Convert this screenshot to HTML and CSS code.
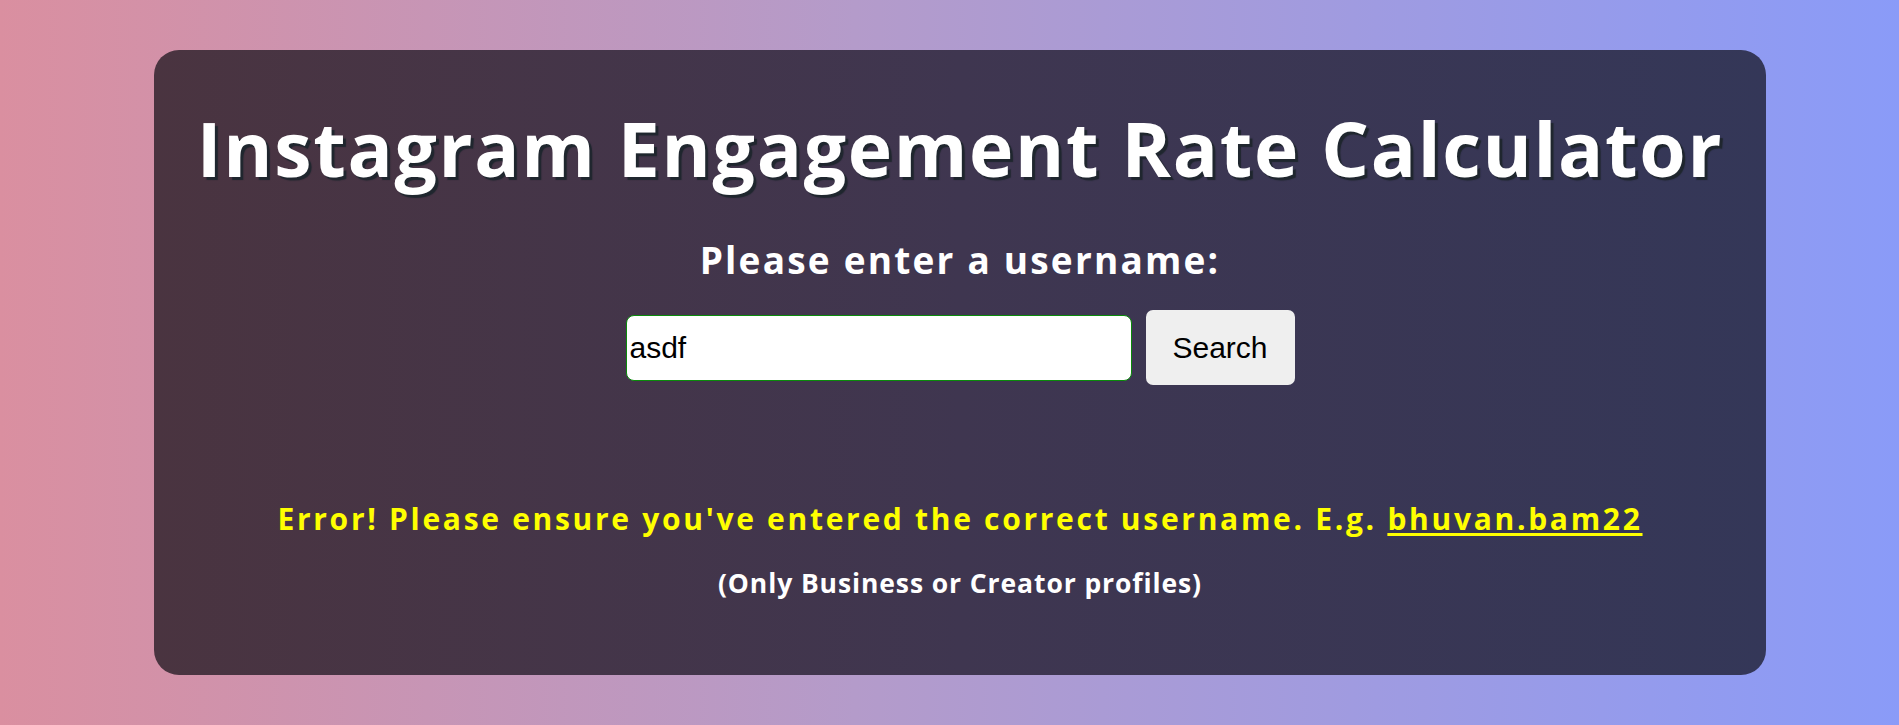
FILE: index.html
```html
<!DOCTYPE html>
<html lang="en">
<head>
<meta charset="utf-8">
<title>Instagram Engagement Rate Calculator</title>
<link rel="stylesheet" href="styles.css">
</head>
<body>
<main class="card">
  <h1 class="title">Instagram Engagement Rate Calculator</h1>
  <h2 class="prompt">Please enter a username:</h2>
  <form class="search-row">
    <input class="search-input" type="text" value="asdf">
    <button class="search-btn" type="button">Search</button>
  </form>
  <p class="error">Error! Please ensure you've entered the correct username. E.g. <a class="error-link" href="#">bhuvan.bam22</a></p>
  <p class="note">(Only Business or Creator profiles)</p>
</main>
</body>
</html>
```
FILE: styles.css
```css
html, body {
  margin: 0;
  padding: 0;
}
body {
  width: 1899px;
  height: 725px;
  overflow: hidden;
  background: linear-gradient(to right, #da8fa0 0%, #b49bca 45%, #8a9bf8 100%);
  font-family: "Open Sans", "Lato", sans-serif;
  color: #ffffff;
}
.card {
  box-sizing: border-box;
  margin: 50px 133px 0 154px;
  height: 625px;
  border-radius: 25px;
  background: linear-gradient(to right, #4a3440 0%, #3f3650 50%, #343758 100%);
  display: flex;
  flex-direction: column;
  align-items: center;
  padding-top: 53px;
}
.title {
  margin: 0;
  font-size: 75px;
  font-weight: 700;
  line-height: 90px;
  letter-spacing: 1.7px;
  text-shadow: 3px 3px 1px #1f262e;
  white-space: nowrap;
}
.prompt {
  margin: 45px 0 0;
  font-size: 37px;
  font-weight: 700;
  line-height: 44px;
  letter-spacing: 2.2px;
}
.search-row {
  margin: 28px 0 0;
  display: flex;
  align-items: center;
  gap: 14px;
}
.search-input {
  box-sizing: border-box;
  width: 506px;
  height: 66px;
  margin: 0;
  padding: 0 3px;
  border: 1px solid #0a8a0a;
  border-radius: 8px;
  background: #ffffff;
  font-family: "Liberation Sans", Arial, sans-serif;
  font-size: 30px;
  color: #000000;
  outline: none;
}
.search-btn {
  box-sizing: border-box;
  width: 149px;
  height: 75px;
  margin: 0;
  padding: 0;
  border: none;
  border-radius: 7px;
  background: #efefef;
  font-family: "Liberation Sans", Arial, sans-serif;
  font-size: 30px;
  color: #000000;
}
.error {
  margin: 116px 0 0;
  font-size: 30px;
  font-weight: 700;
  line-height: 36px;
  letter-spacing: 2.7px;
  color: #ffff00;
  white-space: nowrap;
}
.error-link {
  color: #ffff00;
  text-decoration: underline;
  text-underline-offset: 3px;
}
.note {
  margin: 30px 0 0;
  font-size: 26.5px;
  font-weight: 700;
  line-height: 32px;
  letter-spacing: 0.9px;
  white-space: nowrap;
}
```
